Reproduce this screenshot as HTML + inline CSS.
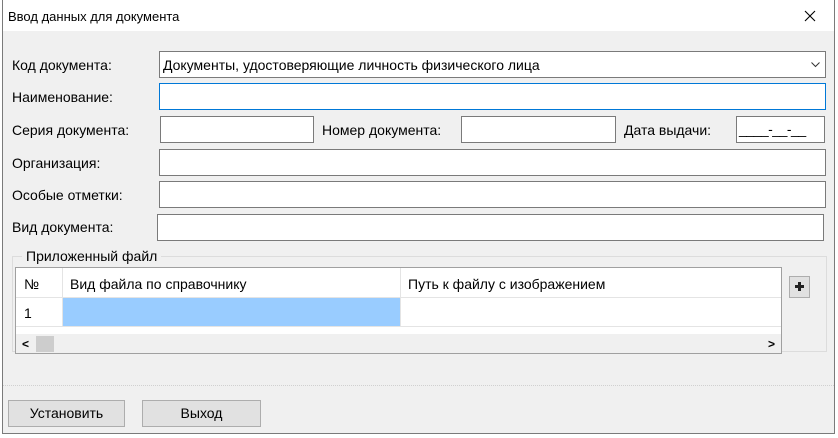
<!DOCTYPE html>
<html><head><meta charset="utf-8"><style>
*{box-sizing:border-box}
body{margin:0;width:838px;height:438px;background:#fff;font-family:"Liberation Sans","DejaVu Sans",sans-serif;font-size:14px;color:#000;position:relative;overflow:hidden}
.a{position:absolute}
.win{left:2px;top:0;width:833px;height:434px;border:1px solid #7a7a7a;border-top:none;background:#f0f0f0}
.title{left:3px;top:0;width:831px;height:31px;background:#fff}
.lbl{position:absolute;line-height:16px;white-space:nowrap}
.in{position:absolute;background:#fff;border:1px solid #7a7a7a;height:27px}
.btn{position:absolute;background:#e1e1e1;border:1px solid #adadad;text-align:center;line-height:25px;height:27px}
</style></head><body>
<div class="a win"></div>
<div class="a title"></div>
<div class="lbl" style="left:8px;top:9px;font-size:13px">Ввод данных для документа</div>
<svg class="a" style="left:804px;top:10px" width="12" height="12"><path d="M1 1L11 11M11 1L1 11" stroke="#000" stroke-width="1.1"/></svg>

<div class="lbl" style="left:12px;top:57px">Код документа:</div>
<div class="in" style="left:159px;top:51px;width:667px;"><span class="lbl" style="left:3px;top:5px">Документы, удостоверяющие личность физического лица</span>
<svg class="a" style="left:651px;top:10px" width="9" height="6"><path d="M0.5 0.5L4.5 4.5L8.5 0.5" stroke="#333" fill="none"/></svg></div>
<div class="lbl" style="left:12px;top:89px">Наименование:</div>
<div class="in" style="left:159px;top:83px;width:667px;border:1px solid #0078d7"></div>
<div class="lbl" style="left:12px;top:122px">Серия документа:</div>
<div class="in" style="left:160px;top:116px;width:154px"></div>
<div class="lbl" style="left:322px;top:122px">Номер документа:</div>
<div class="in" style="left:461px;top:116px;width:155px"></div>
<div class="lbl" style="left:624px;top:122px">Дата выдачи:</div>
<div class="in" style="left:736px;top:116px;width:89px"><span class="lbl" style="left:2px;top:4px;letter-spacing:-0.5px">____-__-__</span></div>
<div class="lbl" style="left:12px;top:155px">Организация:</div>
<div class="in" style="left:159px;top:149px;width:667px"></div>
<div class="lbl" style="left:12px;top:187px">Особые отметки:</div>
<div class="in" style="left:159px;top:181px;width:667px"></div>
<div class="lbl" style="left:12px;top:219px">Вид документа:</div>
<div class="in" style="left:157px;top:214px;width:667px"></div>

<div class="a" style="left:12px;top:256px;width:815px;height:96px;border:1px solid #dcdcdc"></div>
<div class="lbl" style="left:22px;top:248px;background:#f0f0f0;padding:0 4px">Приложенный файл</div>
<div class="a" style="left:15px;top:267px;width:767px;height:87px;border:1px solid #a0a0a0;background:#fff"></div>
<div class="a" style="left:16px;top:297px;width:765px;border-top:1px solid #e4e4e4"></div>
<div class="a" style="left:62px;top:268px;height:59px;border-left:1px solid #e4e4e4"></div>
<div class="a" style="left:400px;top:268px;height:59px;border-left:1px solid #e4e4e4"></div>
<div class="a" style="left:16px;top:326px;width:765px;border-top:1px solid #e4e4e4"></div>
<div class="lbl" style="left:24px;top:276px">№</div>
<div class="lbl" style="left:70px;top:276px">Вид файла по справочнику</div>
<div class="lbl" style="left:408px;top:276px">Путь к файлу с изображением</div>
<div class="lbl" style="left:24px;top:305px">1</div>
<div class="a" style="left:63px;top:298px;width:337px;height:28px;background:#99ccff"></div>
<div class="a" style="left:16px;top:334px;width:765px;height:19px;background:#f0f0f0"></div>
<div class="lbl" style="left:22px;top:336px;font-size:12px;font-weight:bold">&lt;</div>
<div class="a" style="left:36px;top:336px;width:18px;height:16px;background:#cdcdcd"></div>
<div class="lbl" style="left:768px;top:336px;font-size:12px;font-weight:bold">&gt;</div>
<div class="a" style="left:789px;top:276px;width:21px;height:22px;background:#e1e1e1;border:1px solid #adadad"></div>
<svg class="a" style="left:795px;top:282px" width="9" height="9"><path d="M3 0h3v3h3v3h-3v3h-3v-3h-3v-3h3z" fill="#222"/></svg>

<div class="a" style="left:3px;top:385px;width:831px;border-top:1px dotted #d0d0d0"></div>
<div class="btn" style="left:8px;top:400px;width:117px">Установить</div>
<div class="btn" style="left:142px;top:400px;width:119px">Выход</div>
</body></html>
